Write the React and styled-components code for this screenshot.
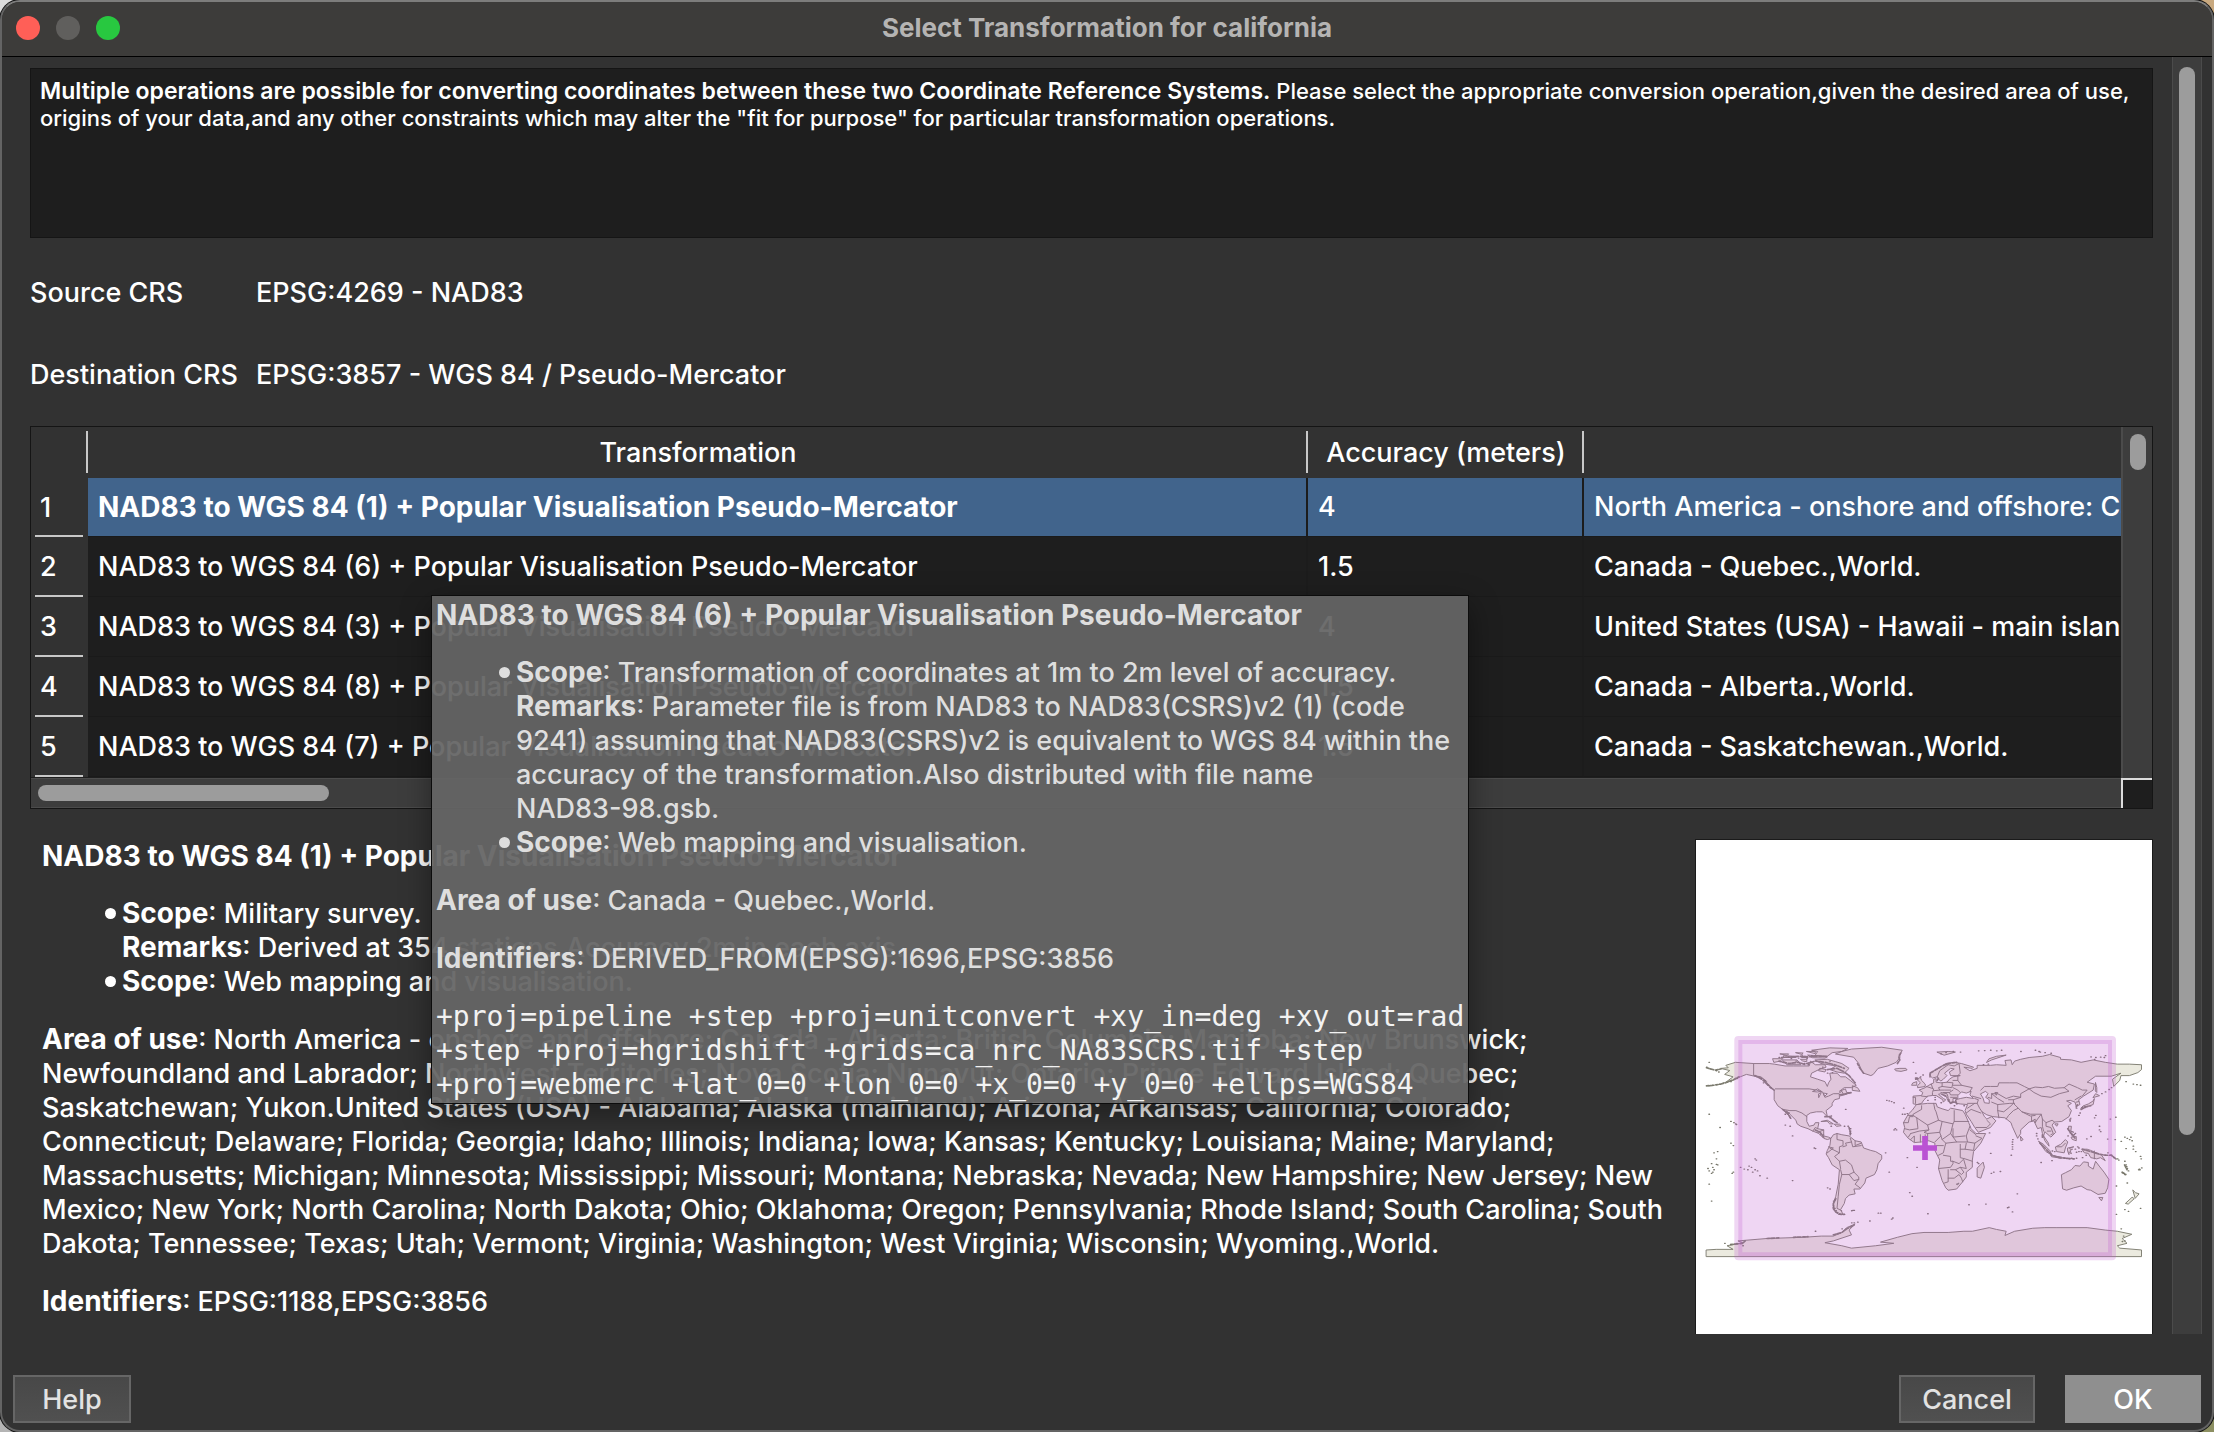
import React from "react";
import styled, { createGlobalStyle } from "styled-components";

const sans = `Inter, "Noto Sans", "Liberation Sans", sans-serif`;
const mono = `"DejaVu Sans Mono", "Liberation Mono", monospace`;

const GlobalStyle = createGlobalStyle`
  *, *::before, *::after { box-sizing: border-box; }
  body {
    margin: 0;
    background:
      linear-gradient(to right, #dcdcdc 50%, #c9a97f 50%) top / 100% 50% no-repeat,
      linear-gradient(to right, #b4b4b4 50%, #8c8f62 50%) bottom / 100% 50% no-repeat;
    font-family: ${sans};
    font-size: 27px;
    font-weight: 500;
    line-height: 34px;
    color: #fff;
  }
`;

/* ---------- window ---------- */

const Window = styled.main`
  position: relative;
  display: flex;
  flex-direction: column;
  min-height: 100vh;
  overflow: hidden;
  background: #323232;
  border: 2px solid #646464;
  border-top-color: #7d7d7c;
  border-radius: 20px;
  box-shadow: 0 0 0 1px #111;
`;

const TitleBar = styled.header`
  display: grid;
  grid-template-columns: 1fr auto 1fr;
  align-items: center;
  height: 55px;
  padding: 0 14px 2px;
  background: #3d3c3a;
  border-bottom: 1px solid #000;
`;

const Title = styled.h1`
  margin: 0;
  font-size: 26px;
  font-weight: 700;
  color: #b5b4b3;
`;

const Lights = styled.div`
  display: flex;
  gap: 16px;
`;

const Light = styled.button`
  width: 24px;
  height: 24px;
  padding: 0;
  border: 0;
  border-radius: 50%;
  background: ${(p) => p.$color};
`;

const Body = styled.div`
  flex: 1;
  display: flex;
  padding-right: 10px;
`;

const Content = styled.div`
  flex: 1;
  min-width: 0;
  display: flex;
  flex-direction: column;
  padding: 11px 19px 0 28px;
`;

/* ---------- scroll bars ---------- */

const Track = styled.div`
  display: flex;
  background: #3d3d3d;
  border: 0 solid #4b4b4b;
`;

const PageTrack = styled(Track)`
  flex: none;
  width: 30px;
  justify-content: center;
  padding: 10px 0;
  border-width: 0 1px;
`;

const TableTrackY = styled(Track)`
  justify-content: center;
  padding: 7px 0;
  border-width: 0 0 0 2px;
`;

const TableTrackX = styled(Track)`
  align-items: center;
  padding: 0 7px;
  border-width: 1px 0;
`;

const Thumb = styled.div`
  width: ${(p) => p.$width || "16px"};
  height: ${(p) => p.$height || "16px"};
  border-radius: 8px;
  background: #9c9c9c;
`;

/* ---------- top of the form ---------- */

const Note = styled.p`
  margin: 0;
  min-height: 170px;
  padding: 9px;
  background: #1e1e1e;
  border: 1px solid #151515;
  font-size: 22px;
  line-height: 27px;

  strong { font-size: 23px; font-weight: 600; line-height: 1; }
`;

const CrsList = styled.dl`
  display: grid;
  grid-template-columns: 226px 1fr;
  row-gap: 48px;
  margin: 38px 0 34px;

  dd { margin: 0; }
`;

/* ---------- operations table ---------- */

const TableFrame = styled.div`
  display: grid;
  grid-template-columns: minmax(0, 1fr) 31px;
  grid-template-rows: 351px 30px;
  border: 1px solid #151515;
`;

const TableView = styled.div`
  overflow: hidden;
  background: #1e1e1e;
`;

const Table = styled.table`
  width: 100%;
  table-layout: fixed;
  border-collapse: separate;
  border-spacing: 0;
`;

const Col = styled.col`
  width: ${(p) => p.$width};
`;

const HeadCell = styled.th`
  height: 51px;
  padding: 0;
  font-weight: 500;
  background: ${(p) =>
      p.$line ? "linear-gradient(#c8c8c8, #c8c8c8) right 4px / 2px 42px no-repeat," : ""}
    linear-gradient(#323232, #323232);
`;

const RowHead = styled.th`
  padding: 0 0 0 9px;
  font-weight: 500;
  text-align: left;
  background:
    linear-gradient(#c8c8c8, #c8c8c8) 4px bottom / 48px 2px no-repeat,
    linear-gradient(#323232, #323232);
`;

const Cell = styled.td`
  padding: 0 0 0 10px;
  overflow: hidden;
  white-space: nowrap;
  border-right: 2px solid #1c1c1c;
  border-bottom: 1px solid #1a1a1a;

  &:last-child { border-right: 0; }
`;

const Row = styled.tr`
  height: ${(p) => (p.$selected ? "59px" : "60px")};

  ${Cell} {
    background: ${(p) => (p.$selected ? "#41648c" : "#1e1e1e")};
  }
  ${Cell}:nth-child(2) {
    font-weight: ${(p) => (p.$selected ? 700 : 500)};
    font-size: ${(p) => (p.$selected ? "28px" : "27px")};
  }
`;

const Corner = styled.div`
  background: #1e1e1e;
  border: solid #dcdcdc;
  border-width: 2px 0 0 2px;
`;

/* ---------- operation description ---------- */

const Description = styled.div`
  strong, h2 {
    font-size: 28px;
    font-weight: 700;
  }
  h2 { margin: 0; line-height: 34px; }
  strong { line-height: 1; }
  p { margin: 24px 0 0; }
  ul {
    margin: 24px 0 0;
    padding: 0 0 0 63px;
    list-style: none;
  }
  li {
    display: grid;
    grid-template-columns: 17px 1fr;
  }
  code {
    font-family: ${mono};
    font-size: 28px;
    font-weight: 400;
    color: #f2f2f2;
  }
`;

const Bullet = styled.span`
  width: 11px;
  height: 11px;
  margin-top: 11px;
  border-radius: 50%;
  background: currentColor;
`;

const DetailRow = styled.section`
  flex: 1;
  display: flex;
  justify-content: space-between;
  gap: 24px;
  margin-top: 30px;
`;

const DetailText = styled(Description)`
  flex: 1;
  min-width: 0;
  padding-left: 12px;
  white-space: nowrap;
`;

const MapPanel = styled.figure`
  flex: none;
  width: 458px;
  margin: 0;
  background: #fff;
  border: solid #1a1a1a;
  border-width: 1px 1px 0;

  svg {
    display: block;
    width: 100%;
    height: 100%;
  }
`;

const Tooltip = styled(Description)`
  position: absolute;
  left: 429px;
  top: 593px;
  width: 1038px;
  padding: 2px 4px 1px;
  white-space: nowrap;
  background: rgba(101, 101, 101, 0.94);
  border: 1px solid #0c0c0c;
  box-shadow: 0 10px 28px rgba(0, 0, 0, 0.4);
  color: #dedede;
`;

/* ---------- buttons ---------- */

const Footer = styled.footer`
  display: flex;
  gap: 30px;
  padding: 41px 11px 7px;
`;

const Button = styled.button`
  width: ${(p) => p.$width};
  height: 48px;
  padding: 2px 0 0;
  font: inherit;
  color: ${(p) => (p.$primary ? "#fff" : "#e2e2e2")};
  background: ${(p) => (p.$primary ? "#8f8f8f" : "linear-gradient(#484848, #505050)")};
  border: 2px solid ${(p) => (p.$primary ? "#8f8f8f" : "#666")};
  margin-right: ${(p) => (p.$push ? "auto" : 0)};
`;

/* ---------- world map, in degrees of longitude and latitude ---------- */

const land = [
  // North America
  "M-168,66 -162,66.5 -164,68.5 -156,71 -141,70 -128,70 -124,69.5 -115,68 -108,68 -101,68 -95,68 -94,72 -90,69 -82,69 -81,67 -87,65 -93,62 -94,59 -88,57 -82,55 -80,51 -79,54 -77,57 -78,62 -72,62 -69,59 -65,59 -61,56 -56,52 -60,50 -66,50 -70,47 -65,49 -64,46 -61,46 -66,44 -70,43 -70,41 -74,40 -76,37 -76,35 -81,31 -80,26 -82,28 -84,30 -89,30 -94,29 -97,27 -97,22 -95,18 -91,19 -90,21 -87,21 -88,16 -83,15 -83,10 -79,9 -77,8 -80,7 -83,8 -87,12 -92,14 -96,16 -102,18 -105,20 -106,23 -112,29 -114,31 -110,24 -112,27 -115,30 -117,32 -121,35 -124,40 -124,48 -127,51 -130,54 -134,58 -138,59 -147,61 -152,59 -158,56 -164,54.5 -158,59 -165,61 -161,64z",
  // Greenland and the Arctic islands
  "M-73,78 -68,80 -60,82 -35,83.5 -18,81 -20,77 -20,75 -23,71 -30,68 -38,66 -42,61 -44,60 -50,62 -52,65 -54,70 -58,75z",
  "M-90,73 -80,73.5 -73,71.5 -68,70 -62,66 -66,62 -72,63 -78,65 -73,68 -85,70z M-90,77 -88,80 -93,81 -78,83 -63,82.5 -68,80 -76,79 -80,76z M-117,73 -110,73 -105,73 -102,69 -113,69z M-125,74 -117,74 -119,72 -124,71z M-96,77 -88,76.5 -80,75.5 -82,74.5 -92,74.8z M-116,76.5 -107,76 -106,75 -116,75z M-102,76 -97,76 -96,75 -101,75z M-102,73.5 -97,73.5 -97,71.5 -100,72z M-86,66 -81,65 -82,63 -87,64z M-97,80 -90,80 -90,78.5z M-106,79 -100,78.7 -101,77.8z M-119,78 -112,78 -113,77z",
  "M-59,51.5 -55,50 -53,47 -59,47.7z M-24,65.5 -20,66 -15,66 -14,64.7 -19,63.5 -23,64z M-85,22 -80,23 -75,20 -78,20 -80,22z M-74,19.7 -70,19.8 -68.5,18.5 -72,18z",
  // South America
  "M-77,8 -75,11 -72,12 -68,11 -62,10 -57,6 -52,5 -50,0 -44,-2 -40,-3 -35,-6 -35,-9 -38,-13 -39,-18 -41,-22 -48,-25 -49,-29 -53,-34 -58,-34 -57,-38 -62,-39 -65,-42 -66,-46 -69,-51 -67,-55 -71,-55 -75,-51 -75,-46 -73,-40 -71,-30 -70,-18 -76,-14 -79,-8 -81,-5 -80,-2 -78,2z",
  // Eurasia
  "M-9,37 -9,43 -2,43.5 -1,46 -4,48 1,50 4,52 8,54 8,57 10,57.5 10,54.5 14,54 19,54.5 21,57 24,59 30,60 22,60 21,63 25,65.5 22,66 17,62 19,60 16,57 14,55.5 12,57 11,59 7,58 5,60 5,62 12,66 18,70 25,71 31,70 41,67 40,66 33,67 38,64 44,66 44,68.5 55,68.5 60,69 68,68.5 67,72.5 72,73 73,69 75,72 80,73.5 87,75 98,76 104,77.5 113,75 113,73.5 122,73 130,71 140,73 150,71 160,69.5 170,69.5 180,69 180,65 177,62.5 170,60 163,60 162,56 157,51 156,57 163,62 155,59.5 142,59.5 135,54.5 141,53 140,48 132,43 128,40 129,36 126,34.5 125,38 121,39.5 118,39 122,37 119,35 122,31 120,26 114,22 108,21.5 106,19 109,13 105,9 100,13.5 99,10 103,4 103.5,1.5 100,6 98,12 97,17 94,16 91,22.5 87,21.5 80,15 80,12 77.5,8 73,18 72,21 67,25 57,26 52,27.5 48,30 50,26 52,24 56,26 59.5,22.5 55,17 45,13 42,17 39,22 35,28 34,31 36,36 30,36.5 27,37 26,40 30,41 35,42 41,41 38,44 39,47 35,45.5 33,46 31,46.5 28,43.5 28,41 24,41 24,38 22,37 19,41 19,42 14,45 12,44.5 16,41 18,40 16,38 15.5,40 10,43.5 7,43.5 3,43 0,40 -2,37 -5.5,36z",
  "M-5,50 1,51 1,53 -2,56 -3,58.5 -6,57 -3,54 -5,52z M-10,52 -6,52 -6,55 -9,54z M52,71 56,73 68,77 60,76 54,74z M11,79.5 20,80 26,79.5 17,77z",
  // Africa
  "M-6,36 3,37 10,37 11,34 15,32.5 20,31 22,33 32,31 34,28 37,21 39,16 43,12 51,12 47,4 41,-3 40,-10 40,-16 35,-20 35,-24 32,-28 27,-34 20,-35 18,-33 15,-27 12,-17 13,-10 9,-2 9,4 4,6 -2,5 -8,4.5 -13,8 -17,13 -16,17 -17,21 -13,28 -10,31z",
  "M49,-12 50,-16 47,-25 44,-24 44,-17z M80,9.5 82,7 80.5,6z",
  // Indonesia, Philippines, Japan
  "M95,5.5 99,3 104,-2 106,-6 101,-3z M105,-6.3 114,-7.5 114,-8.6 106,-7.3z M109,1 113,3 117,7 119,5 117,0 116,-4 110,-3z M119,0 124,1 120.5,0 121,-1 123,-1 121,-2 122,-5 120,-3 120,-5.5 119,-3z M131,-1 135,-1 138,-2 147,-6 150,-10.5 146,-8 143,-9 138,-8 136,-4.5 133,-4z M120,18 122,18 121.5,14 124,13 120,14.5z M122,9 126,9.5 126,6 123,7z M130,33 132,34 137,35 140,36 141,41 140,39 136,36.5 132,35z M140,42 142,45 145,43.5z M142,54 143,50 143,46 142,47z M108.5,20 111,20 110,18.3z M120.5,24 121.7,25 121,22z",
  // Australia and New Zealand
  "M114,-22 117,-20.5 122,-18 125,-14.5 129,-15 132,-11.5 136,-12 136,-15 140,-17.5 142,-11 145,-15 149,-20 153,-26 152,-33 150,-37.5 144,-38.5 138,-35 135,-34.5 130,-31.5 124,-33 118,-35 115,-34z M145,-41 148,-41 147,-43.5z M173,-35 175,-37 178,-38 175,-41.5z M172.5,-41 174,-42 169,-46.5 167,-46z",
  // Antarctica
  "M-180,-84.5 -172,-84 -158,-84 -163,-81 -150,-78.5 -154,-77 -130,-75 -115,-74.5 -100,-74 -85,-73 -75,-73 -68,-70 -64,-66 -57,-63 -62,-68 -60,-72 -75,-77 -82,-78.5 -68,-81 -60,-83 -40,-81 -25,-79 -36,-78 -22,-74 -10,-71 0,-70 20,-70 33,-69 40,-69 54,-66 60,-67.5 68,-69 67,-72.5 75,-69 90,-66.5 100,-66 110,-66 135,-66 150,-68 160,-69 172,-71.5 164,-75 168,-79 160,-81 162,-83 180,-84.5 180,-90 -180,-90z",
];

const seas = "M47,45 51,47 53,45 51,42 54,40 54,37 50,37.5 49,41z M59,46 61,46 60,44z M-92,47 -88,49 -85,47 -88,46.5z M-87,45 -85,46 -87,42z M-83,45.5 -80,45 -82,43z";

const borders = [
  "M-123,49 -95,49 -89,48 -84,46.5 -82,42 -79,43 -75,45 -71,45 -68,47 -67,45 M-141,70 -141,60 -135,59 -130,55 M-117,32 -111,31 -106,31 -101,29 -97,26 M-92,14 -90,17 -88,16 M-88,13 -83,15 M-86,11 -83,11",
  "M-72,12 -72,7 -67,6 -67,2 -70,1 -70,-4 -78,0 M-61,8 -60,5 -65,4 -64,2 -67,1 M-57,6 -57,2 -52,4 M-60,5 -59,1 -52,2 M-79,1 -75,0 -80,-4 M-70,-4 -74,-7 -70,-11 -69,-17 M-70,-11 -65,-10 -60,-14 -58,-20 -54,-24 -54,-26 -57,-30 -53,-33 M-69,-18 -68,-22 -62,-22 -58,-20 M-62,-22 -58,-27 -54,-26 M-68,-22 -70,-30 -71,-40 -72,-50 -68,-52",
  "M-2,35 -2,32 -9,28 -9,27 -13,27 M8,37 9,32 10,30 12,23 3,19 -9,27 M12,23 15,22 24,20 25,22 25,31 M25,22 37,22 M-17,21 -13,21 -12,26 -9,26 M-6,25 -5,16 -12,15 -16,16 M3,19 4,15 -4,14 -11,12 M4,15 0,13 3,12 13,13 15,22 M24,20 22,12 15,7 13,13 M9,5 14,10 M22,12 27,5 36,5 35,10 38,18 M24,16 24,9 34,10 M38,15 43,11 M36,5 42,4 48,8 43,10 M42,4 41,-2 34,-1 35,4 M34,-1 30,-1 30,-8 34,-9 40,-11 M30,3 30,-1 M27,5 18,4 16,-4 12,-6 M16,2 10,2 M18,4 15,7 M16,-6 22,-7 22,-11 24,-11 24,-13 22,-16 12,-17 M24,-11 29,-13 33,-9 M33,-10 35,-17 30,-16 26,-18 22,-18 M30,-16 33,-20 31,-22 26,-18 M20,-18 20,-28 17,-29 M20,-25 25,-25 29,-22 31,-25 32,-28 M27,-30 29,-29 28,-30.5 27,-30 M-11,7 -8,10 -8,5 M-3,5 -3,11 M1,6 1,11 M3,6 3,12 M-13,9 -11,12",
  "M-9,42 -7,42 -7,37 M-2,43 3,42.5 M2,51 8,49 7,46 7,44 M6,53 7,50 M15,54 15,51 12,50 13,48 8,47.5 M15,51 23,50 24,54 19,54.5 M13,48 17,48 22,48 M16,46 21,46 24,48 M21,46 22,44 28,44 M22,42 27,42 M19,42 21,40 M28,60 28,56 24,56 M28,56 31,52 24,52 M31,52 40,50 38,47 M24,50 28,48 30,46 M11,59 13,64 20,69 M20,69 25,68 29,70 30,62 28,60 M14,46 19,45 20,42",
  "M40,43 47,41 M36,37 44,37 45,40 42,41 M44,37 46,33 48,30 M36,33 42,37 M35,29 39,32 47,29 M52,23 55,20 52,17 43,17 M56,38 61,36 61,31 62,25 M61,36 71,37 75,37 M61,31 66,30 71,34 74,37 78,33 74,31 70,27 68,24 M53,42 56,41 56,45 61,41 66,38 M47,48 50,51 55,51 61,51 62,54 71,54 77,54 83,51 87,49 80,45 80,42 74,43 68,41 61,45 56,45 M70,40 74,40 80,42 M74,40 74,37 M87,49 92,50.5 98,50 103,51 108,49.5 116,50 120,47 112,45 105,42 97,43 91,46 87,49 M116,50 120,53 127,50 131,48 135,48 131,43 M78,33 81,30 88,28 97,28 98,24 101,21 106,23 108,21.5 M81,30 88,26.5 92,27 M89,26 89,22 92,24 92,21 M97,28 94,24 92,21 M98,24 98,18 99,14 M101,21 101,18 105,17 107,12 105,11 M102,14 105,14 M126,38 128,38.5 M125,40 130,43 M110,1 114,1 117,4 M141,-2.5 141,-9",
].join(" ");

const specks = [
  [-178, 71], [-180, 67], [-172, 64], [-170, 63], [-175, 52], [-172, 52.5], [-169, 53], [-166, 54], [-178, 51.5], [-160, 55], [-155, 57.5],
  [-160, 22], [-157.5, 21], [-156, 20], [-155.5, 19.5], [-178, 28], [-169, 17], [-152, -16], [-149, -17.5], [-146, -18], [-140, -9], [-139, -10], [-143, -16], [-145, -15], [-140, -18], [-142, -20], [-138, -19], [-136, -23], [-130, -25], [-109, -27], [-158, -20], [-159, -21], [-172, -13.5], [-171, -14], [-175, -16], [-175, -20], [-176, -21], [-174, -18], [-178, -19], [-179, -17], [-176, -13], [-172, -9], [-174, -4], [-171, -3], [-158, 2], [-160, 4], [-176, -44], [-178, -30],
  [-91, 0], [-90, -0.5], [-109, 10], [-115, 19], [-111, 18], [-80, -33], [-78, -34], [-65, 32], [-61, 16], [-61, 14], [-61, 12], [-63, 18], [-66, 18], [-77, 18], [-78, 25], [-76, 24], [-74, 22], [-77, 26.5],
  [-29, 39], [-27, 38.5], [-25, 37.5], [-31, 39.5], [-17, 33], [-16, 28], [-14, 28.5], [-18, 28], [-24, 16], [-25, 15], [-23, 15], [-14, -8], [-6, -16], [-32, -4], [-29, -20], [-12, -37], [-10, -40], [-59, -51.7], [-60, -52], [-58, -51.7], [-36, -54], [-38, -54], [-26, -58], [-27, -59], [-45, -60.5], [3, -54.5], [37, -47], [51, -46.5], [69, -49.5], [70, -49], [73, -53], [77, -38],
  [-7, 62], [-1, 60.5], [-3, 59], [-9, 71], [-6, 58], [-7, 57], [3, 39.5], [9, 42], [9, 40], [14, 37.5], [25, 35], [27, 36.5], [33, 35], [25, 38], [26, 39], [23, 38], [20, 39],
  [55, -4.5], [55.5, -21], [57.5, -20], [44, -12], [45, -13], [63, -19.5], [54, 12.5], [73, 5], [73, 3], [73, 1], [73.3, 7], [73, -1], [72, -6], [93, 12], [93, 10], [94, 7.5], [96.7, -12], [105.7, -10.5],
  [145, 15], [145, 18], [146, 13.5], [134.5, 7.5], [138, 9.5], [151.8, 7.4], [158, 7], [163, 5.5], [166, 9], [168, 8], [170, 7], [171, 9], [172, 6], [173, 1.5], [173, -1], [167, -0.5], [175, -3], [179, -7], [179.5, -9], [154, -6], [155, -6], [157, -8], [160, -9], [161, -10], [152, -4], [150, -6], [166, -11], [167, -14], [167.5, -15.5], [168, -17], [169, -19], [165, -21], [166, -22], [164, -20.5], [178, -17.5], [178.5, -18], [177.5, -18], [180, -16.5], [168, -29], [159, -31.5], [166, -51], [169, -52.5], [179, -50], [159, -55], [158.5, 25.5], [142, 27], [141, 25], [154, 24],
  [125, -1], [127, 1], [128, 0], [128, -3], [130, -3], [126, -3.5], [116, -8.5], [118, -8.7], [120, -9], [122, -8.5], [124, -9], [126, -8.5], [123, 10], [124, 11], [122, 11], [119, 10], [125, 12], [121, 12.5], [106, -2.5], [108, -3], [134, -6], [131, -8], [128, 27], [129, 29], [126, 33], [131, 33], [133, 34], [147, 45], [150, 46.5], [153, 48.5], [155, 50], [167, 55], [173, 53], [176, 52.5], [179, 52],
  [45, 80.5], [50, 80.7], [55, 81], [60, 80.5], [64, 81], [80, 80], [92, 81], [95, 80], [100, 79], [96, 79.5], [105, 78.5], [138, 75.5], [142, 75], [146, 75.3], [149, 75], [141, 73.5], [150, 76.5], [18, 79], [14, 78], [24, 80], [30, 79.5], [53, 69.5], [49, 69],
  [-133, 54], [-132, 56], [-135, 57.5], [-127, 50], [-129, 52], [-112, 29], [-115, 28], [-75, -44], [-74, -43], [-75, -48], [-74, -50], [-72, -53.5], [-70, -55], [-66, -55], [-75, -49], [-73, -52], [-97, 74], [-104, 74.5], [-110, 74], [-93, 76.5], [-99, 70], [-96, 69], [-106, 72], [-78, 72], [-120, 75], [-101, 77], [-112, 75.5], [-84, 67], [-76, 62.5], [-80, 62],
  [-60, -62], [-58, -62], [-55, -61.5], [-68, -67], [-90, -69], [-165, -79], [-160, -80], [-150, -81], [-155, -79], [163, -67], [165, -73], [166, -77], [164, -77.5],
];

const speckPath = specks.map(([x, y]) => `M${x},${y}h0.5`).join("");

// Rugged shores, drawn with a heavier line: island chains, fjords and straits.
const shores = [
  "M-180,51.5 -174,52 -168,53 -163,54.5 -157,57 -153,59 M-180,66.5 -173,64.5 -168,65.5 M-140,60 -136,58 -133,56 -130,53 -127,50 -124,48",
  "M-117,32 -113,29 -110,24 M-97,70 -90,72 -82,71 -74,69 -66,66 M-118,75 -110,75.5 -104,76 -97,75.5 -88,76 -80,76 M-120,72 -112,70 -104,71 -98,69 M-80,65 -72,66 -66,63 -62,60 -57,54",
  "M-70,44 -64,45 -60,46 M-82,26 -78,26 -75,23 -72,21 M-62,17 -61,13 -61,11 M-90,15 -86,13 -83,9",
  "M-73,-42 -75,-46 -75,-50 -73,-53 -69,-55 -66,-55 M-22,70 -20,73 -21,76 -19,79 M-50,62 -53,66 -55,70",
  "M5,59 5,62 10,65 15,68 20,70 27,71 M11,56 12,58 M18,43 15,44.5 M20,40 22,37 24,38 26,38 27,37 M-7,58 -5,57",
  "M96,4 100,0 104,-4 106,-6 112,-8 118,-8.5 124,-9 M98,11 98,8 M119,16 121,13 123,11 125,8 M131,-1 138,-3 145,-5 150,-6 155,-6 160,-10 M166,-14 168,-18 M164,-20 167,-22",
  "M126,34 127,36 M130,32 134,34 138,35 M-75,-72 -68,-70 -64,-67 -58,-64 M-160,-80 -150,-79 -148,-77 M-130,-75 -120,-74.5 M-108,-74 -96,-73.5",
].join(" ");

function WorldMap() {
  return (
    <svg viewBox="48 -540 1368 1482" role="img" aria-label="Area of use">
      <g
        transform="translate(732 384) scale(3.625 -3.62)"
        stroke="#7f7e72"
        strokeWidth="0.8"
        strokeLinejoin="round"
        strokeLinecap="round"
      >
        <path d={land.join(" ")} fill="#ebeadf" />
        <path d={seas} fill="#fff" />
        <path d={borders} fill="none" />
        <path d={shores} fill="none" strokeWidth="1.4" strokeDasharray="2 1.2 3 1.6" />
        <path d={speckPath} fill="none" stroke="#77766a" strokeWidth="1.1" />
      </g>
      <rect
        x="175"
        y="60"
        width="1121"
        height="649"
        fill="rgba(190, 90, 207, 0.25)"
        stroke="rgba(190, 90, 207, 0.25)"
        strokeWidth="24"
        strokeLinejoin="round"
      />
      <path d="M735,348V420M699,384H771" stroke="#ba52d3" strokeWidth="17" />
    </svg>
  );
}

/* ---------- data ---------- */

const operations = [
  { code: 1, accuracy: "4", area: "North America - onshore and offshore: Canada" },
  { code: 6, accuracy: "1.5", area: "Canada - Quebec.,World." },
  { code: 3, accuracy: "4", area: "United States (USA) - Hawaii - main islands" },
  { code: 8, accuracy: "1.5", area: "Canada - Alberta.,World." },
  { code: 7, accuracy: "1.5", area: "Canada - Saskatchewan.,World." },
];

const areaLines = [
  "North America - onshore and offshore: Canada - Alberta; British Columbia; Manitoba; New Brunswick;",
  "Newfoundland and Labrador; Northwest Territories; Nova Scotia; Nunavut; Ontario; Prince Edward Island; Quebec;",
  "Saskatchewan; Yukon.United States (USA) - Alabama; Alaska (mainland); Arizona; Arkansas; California; Colorado;",
  "Connecticut; Delaware; Florida; Georgia; Idaho; Illinois; Indiana; Iowa; Kansas; Kentucky; Louisiana; Maine; Maryland;",
  "Massachusetts; Michigan; Minnesota; Mississippi; Missouri; Montana; Nebraska; Nevada; New Hampshire; New Jersey; New",
  "Mexico; New York; North Carolina; North Dakota; Ohio; Oklahoma; Oregon; Pennsylvania; Rhode Island; South Carolina; South",
  "Dakota; Tennessee; Texas; Utah; Vermont; Virginia; Washington; West Virginia; Wisconsin; Wyoming.,World.",
];

const remarkLines = [
  "Parameter file is from NAD83 to NAD83(CSRS)v2 (1) (code",
  "9241) assuming that NAD83(CSRS)v2 is equivalent to WGS 84 within the",
  "accuracy of the transformation.Also distributed with file name",
  "NAD83-98.gsb.",
];

const projLines = [
  "+proj=pipeline +step +proj=unitconvert +xy_in=deg +xy_out=rad",
  "+step +proj=hgridshift +grids=ca_nrc_NA83SCRS.tif +step",
  "+proj=webmerc +lat_0=0 +lon_0=0 +x_0=0 +y_0=0 +ellps=WGS84",
];

const opName = (code) => `NAD83 to WGS 84 (${code}) + Popular Visualisation Pseudo-Mercator`;

function Lines({ items }) {
  return items.map((line, i) => (
    <React.Fragment key={line}>
      {i > 0 && <br />}
      {line}
    </React.Fragment>
  ));
}

function Item({ children }) {
  return (
    <li>
      <Bullet />
      <div>{children}</div>
    </li>
  );
}

export default function App() {
  return (
    <>
      <GlobalStyle />
      <Window>
        <TitleBar>
          <Lights>
            <Light $color="#ff5f57" aria-label="Close" />
            <Light $color="#605f5d" aria-label="Minimize" />
            <Light $color="#28c840" aria-label="Zoom" />
          </Lights>
          <Title>Select Transformation for california</Title>
        </TitleBar>

        <Body>
          <Content>
            <Note>
              <strong>
                Multiple operations are possible for converting coordinates between these two
                Coordinate Reference Systems.
              </strong>{" "}
              Please select the appropriate conversion operation,given the desired area of use,
              <br />
              origins of your data,and any other constraints which may alter the "fit for purpose"
              for particular transformation operations.
            </Note>

            <CrsList>
              <dt>Source CRS</dt>
              <dd>EPSG:4269 - NAD83</dd>
              <dt>Destination CRS</dt>
              <dd>EPSG:3857 - WGS 84 / Pseudo-Mercator</dd>
            </CrsList>

            <TableFrame>
              <TableView>
                <Table>
                  <colgroup>
                    <Col $width="57px" />
                    <Col $width="1220px" />
                    <Col $width="276px" />
                    <Col />
                  </colgroup>
                  <thead>
                    <tr>
                      <HeadCell $line />
                      <HeadCell $line scope="col">Transformation</HeadCell>
                      <HeadCell $line scope="col">Accuracy (meters)</HeadCell>
                      <HeadCell />
                    </tr>
                  </thead>
                  <tbody>
                    {operations.map((op, i) => (
                      <Row key={op.code} $selected={i === 0}>
                        <RowHead scope="row">{i + 1}</RowHead>
                        <Cell>{opName(op.code)}</Cell>
                        <Cell>{op.accuracy}</Cell>
                        <Cell>{op.area}</Cell>
                      </Row>
                    ))}
                  </tbody>
                </Table>
              </TableView>
              <TableTrackY>
                <Thumb $height="36px" />
              </TableTrackY>
              <TableTrackX>
                <Thumb $width="14%" />
              </TableTrackX>
              <Corner />
            </TableFrame>

            <DetailRow>
              <DetailText>
                <h2>{opName(1)}</h2>
                <ul>
                  <Item>
                    <strong>Scope</strong>: Military survey.
                    <br />
                    <strong>Remarks</strong>: Derived at 354 stations.Accuracy 2m in each axis.
                  </Item>
                  <Item>
                    <strong>Scope</strong>: Web mapping and visualisation.
                  </Item>
                </ul>
                <p>
                  <strong>Area of use</strong>: <Lines items={areaLines} />
                </p>
                <p>
                  <strong>Identifiers</strong>: EPSG:1188,EPSG:3856
                </p>
              </DetailText>
              <MapPanel>
                <WorldMap />
              </MapPanel>
            </DetailRow>
          </Content>

          <PageTrack>
            <Thumb $height="85%" />
          </PageTrack>
        </Body>

        <Footer>
          <Button $width="118px" $push>Help</Button>
          <Button $width="136px">Cancel</Button>
          <Button $width="136px" $primary>OK</Button>
        </Footer>

        <Tooltip role="tooltip">
          <h2>{opName(6)}</h2>
          <ul>
            <Item>
              <strong>Scope</strong>: Transformation of coordinates at 1m to 2m level of accuracy.
              <br />
              <strong>Remarks</strong>: <Lines items={remarkLines} />
            </Item>
            <Item>
              <strong>Scope</strong>: Web mapping and visualisation.
            </Item>
          </ul>
          <p>
            <strong>Area of use</strong>: Canada - Quebec.,World.
          </p>
          <p>
            <strong>Identifiers</strong>: DERIVED_FROM(EPSG):1696,EPSG:3856
          </p>
          <p>
            <code>
              <Lines items={projLines} />
            </code>
          </p>
        </Tooltip>
      </Window>
    </>
  );
}
